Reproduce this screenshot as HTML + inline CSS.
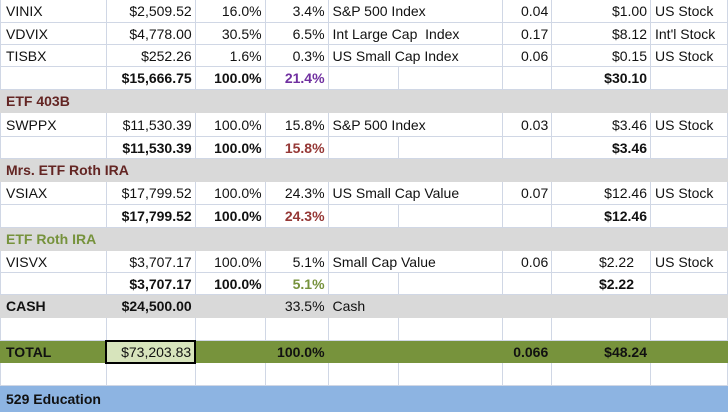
<!DOCTYPE html>
<html><head><meta charset="utf-8"><style>
body{margin:0;width:728px;height:410px;overflow:hidden;background:#fff;font-family:"Liberation Sans",Arial,sans-serif;font-size:14px;color:#111}
table{position:absolute;left:0;top:-1px;border-collapse:collapse;table-layout:fixed}
td{border:1px solid #d0d7e5;padding:0 3px 0 4px;white-space:nowrap;overflow:visible;line-height:14px}
td.f{padding-left:5px}
.r{text-align:right}
.b{font-weight:bold}
.g td{background:#d9d9d9;border-color:#d9d9d9}
.grn td{background:#77933c;border-color:#77933c;font-weight:bold}
.blu td{background:#8db4e2;border-color:#8db4e2;font-weight:bold}
</style></head><body>
<table>
<colgroup><col style="width:106px"><col style="width:89px"><col style="width:70px"><col style="width:63px"><col style="width:71px"><col style="width:104px"><col style="width:49px"><col style="width:99px"><col style="width:77px"></colgroup>
<tr style="height:23px"><td class="f">VINIX</td><td class="r">$2,509.52</td><td class="r">16.0%</td><td class="r">3.4%</td><td colspan="2">S&amp;P 500 Index</td><td class="r">0.04</td><td class="r">$1.00</td><td>US Stock</td></tr>
<tr style="height:22px"><td class="f">VDVIX</td><td class="r">$4,778.00</td><td class="r">30.5%</td><td class="r">6.5%</td><td colspan="2">Int Large Cap&nbsp; Index</td><td class="r">0.17</td><td class="r">$8.12</td><td>Int'l Stock</td></tr>
<tr style="height:22px"><td class="f">TISBX</td><td class="r">$252.26</td><td class="r">1.6%</td><td class="r">0.3%</td><td colspan="2">US Small Cap Index</td><td class="r">0.06</td><td class="r">$0.15</td><td>US Stock</td></tr>
<tr style="height:23px"><td class="f"></td><td class="r b">$15,666.75</td><td class="r b">100.0%</td><td class="r b" style="color:#7030a0">21.4%</td><td></td><td></td><td></td><td class="r b">$30.10</td><td></td></tr>
<tr class="g" style="height:23px"><td colspan="9" class="b f" style="color:#632523">ETF 403B</td></tr>
<tr style="height:24px"><td class="f">SWPPX</td><td class="r">$11,530.39</td><td class="r">100.0%</td><td class="r">15.8%</td><td colspan="2">S&amp;P 500 Index</td><td class="r">0.03</td><td class="r">$3.46</td><td>US Stock</td></tr>
<tr style="height:22px"><td class="f"></td><td class="r b">$11,530.39</td><td class="r b">100.0%</td><td class="r b" style="color:#953735">15.8%</td><td></td><td></td><td></td><td class="r b">$3.46</td><td></td></tr>
<tr class="g" style="height:23px"><td colspan="9" class="b f" style="color:#632523">Mrs. ETF Roth IRA</td></tr>
<tr style="height:23px"><td class="f">VSIAX</td><td class="r">$17,799.52</td><td class="r">100.0%</td><td class="r">24.3%</td><td colspan="2">US Small Cap Value</td><td class="r">0.07</td><td class="r">$12.46</td><td>US Stock</td></tr>
<tr style="height:23px"><td class="f"></td><td class="r b">$17,799.52</td><td class="r b">100.0%</td><td class="r b" style="color:#953735">24.3%</td><td></td><td></td><td></td><td class="r b">$12.46</td><td></td></tr>
<tr class="g" style="height:23px"><td colspan="9" class="b f" style="color:#76923c">ETF Roth IRA</td></tr>
<tr style="height:22px"><td class="f">VISVX</td><td class="r">$3,707.17</td><td class="r">100.0%</td><td class="r">5.1%</td><td colspan="2">Small Cap Value</td><td class="r">0.06</td><td class="r" style="padding-right:16px">$2.22</td><td>US Stock</td></tr>
<tr style="height:22px"><td class="f"></td><td class="r b">$3,707.17</td><td class="r b">100.0%</td><td class="r b" style="color:#76923c">5.1%</td><td></td><td></td><td></td><td class="r b" style="padding-right:16px">$2.22</td><td></td></tr>
<tr class="g" style="height:23px"><td class="b f">CASH</td><td class="r b">$24,500.00</td><td></td><td class="r">33.5%</td><td colspan="5">Cash</td></tr>
<tr style="height:23px"><td class="f"></td><td></td><td></td><td></td><td></td><td></td><td></td><td></td><td></td></tr>
<tr class="grn" style="height:22px"><td class="f">TOTAL</td><td class="r" style="background:#d7e4bc;border:2px solid #000;font-weight:normal">$73,203.83</td><td></td><td class="r">100.0%</td><td></td><td></td><td class="r">0.066</td><td class="r">$48.24</td><td></td></tr>
<tr style="height:23px"><td class="f"></td><td></td><td></td><td></td><td></td><td></td><td></td><td></td><td></td></tr>
<tr class="blu" style="height:26px"><td colspan="9" class="f">529 Education</td></tr>
</table>
</body></html>
